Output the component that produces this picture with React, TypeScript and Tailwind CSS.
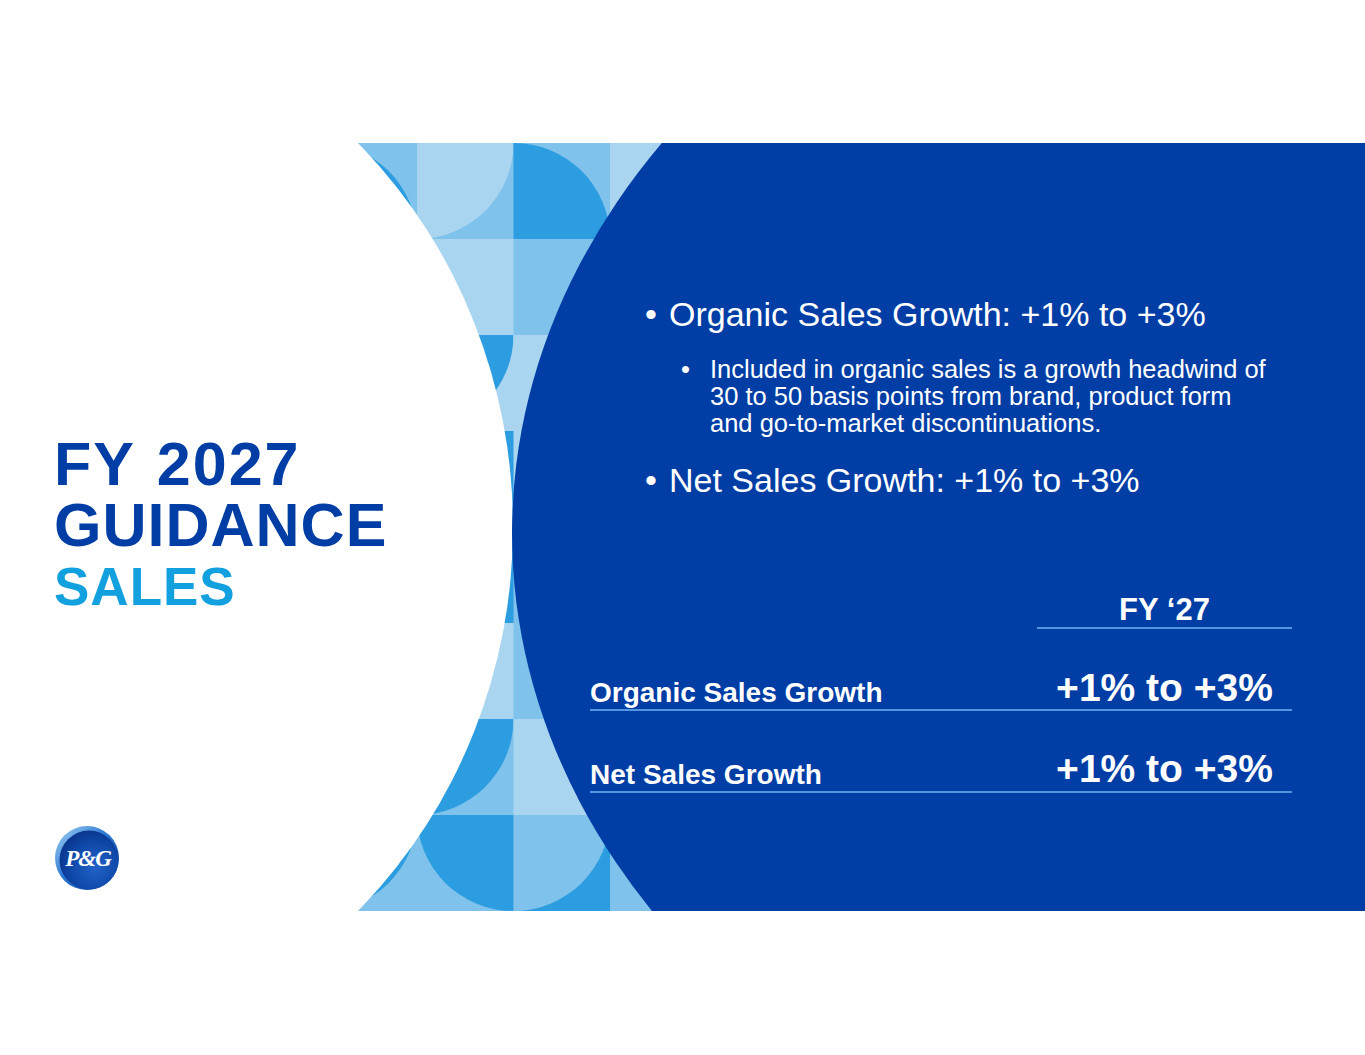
import React from "react";

const L = "#a9d5f1";
const M = "#7fc2eb";
const D = "#2c9de0";

type Corner = "TL" | "TR" | "BL" | "BR";
type Tile = { r: number; c: number; bg: string; q?: { corner: Corner; color: string } };

const TW = 96.5;
const TH = 96;
const X0 = 320.5;

function quarter(x: number, y: number, w: number, h: number, corner: Corner) {
  switch (corner) {
    case "TL":
      return `M${x} ${y} L${x + w} ${y} A${w} ${h} 0 0 1 ${x} ${y + h} Z`;
    case "TR":
      return `M${x + w} ${y} L${x + w} ${y + h} A${w} ${h} 0 0 1 ${x} ${y} Z`;
    case "BL":
      return `M${x} ${y + h} L${x} ${y} A${w} ${h} 0 0 1 ${x + w} ${y + h} Z`;
    case "BR":
      return `M${x + w} ${y + h} L${x} ${y + h} A${w} ${h} 0 0 1 ${x + w} ${y} Z`;
  }
}

const tiles: Tile[] = [
  { r: 0, c: 0, bg: M, q: { corner: "BL", color: D } },
  { r: 0, c: 1, bg: M, q: { corner: "TL", color: L } },
  { r: 0, c: 2, bg: M, q: { corner: "BL", color: D } },
  { r: 0, c: 3, bg: L },
  { r: 1, c: 0, bg: L },
  { r: 1, c: 1, bg: L },
  { r: 1, c: 2, bg: M },
  { r: 1, c: 3, bg: M },
  { r: 2, c: 0, bg: L },
  { r: 2, c: 1, bg: L, q: { corner: "TL", color: D } },
  { r: 2, c: 2, bg: L },
  { r: 2, c: 3, bg: L },
  { r: 3, c: 0, bg: L },
  { r: 3, c: 1, bg: D },
  { r: 3, c: 2, bg: L },
  { r: 3, c: 3, bg: L },
  { r: 4, c: 0, bg: L },
  { r: 4, c: 1, bg: D },
  { r: 4, c: 2, bg: M },
  { r: 4, c: 3, bg: M },
  { r: 5, c: 0, bg: L },
  { r: 5, c: 1, bg: L },
  { r: 5, c: 2, bg: M },
  { r: 5, c: 3, bg: M },
  { r: 6, c: 0, bg: L },
  { r: 6, c: 1, bg: M, q: { corner: "TL", color: D } },
  { r: 6, c: 2, bg: L },
  { r: 6, c: 3, bg: L },
  { r: 7, c: 0, bg: M, q: { corner: "TL", color: D } },
  { r: 7, c: 1, bg: M, q: { corner: "TR", color: D } },
  { r: 7, c: 2, bg: D, q: { corner: "TL", color: M } },
  { r: 7, c: 3, bg: M },
];

function BackgroundArt() {
  return (
    <svg
      className="absolute inset-0"
      width={1365}
      height={768}
      viewBox="0 0 1365 768"
      aria-hidden="true"
    >
      {tiles.map((t, i) => {
        const x = X0 + t.c * TW;
        const y = t.r * TH;
        return (
          <g key={i}>
            <rect x={x} y={y} width={TW + 0.5} height={TH + 0.5} fill={t.bg} />
            {t.q && <path d={quarter(x, y, TW, TH, t.q.corner)} fill={t.q.color} />}
          </g>
        );
      })}
      <ellipse cx={0} cy={384} rx={513} ry={536} fill="#ffffff" />
      <ellipse cx={1396} cy={390} rx={884} ry={700} fill="#003da5" />
    </svg>
  );
}

function Logo() {
  return (
    <svg width={66} height={66} viewBox="0 0 66 66" aria-label="P&G">
      <defs>
        <linearGradient id="pgRing" x1="0" y1="0" x2="1" y2="1">
          <stop offset="0" stopColor="#a6d6f6" />
          <stop offset="0.45" stopColor="#2b78d4" />
          <stop offset="1" stopColor="#0a3a94" />
        </linearGradient>
        <radialGradient id="pgFill" cx="0.6" cy="0.62" r="0.62">
          <stop offset="0" stopColor="#2262c6" />
          <stop offset="0.65" stopColor="#0f49aa" />
          <stop offset="1" stopColor="#0a3790" />
        </radialGradient>
      </defs>
      <circle cx={33} cy={33} r={32} fill="url(#pgRing)" />
      <circle cx={35} cy={35} r={29.5} fill="url(#pgFill)" />
      <text
        x={34}
        y={41}
        textAnchor="middle"
        fill="#ffffff"
        fontFamily="'Liberation Serif', 'DejaVu Serif', serif"
        fontStyle="italic"
        fontWeight="bold"
        fontSize={23}
        letterSpacing={-1}
      >
        P&amp;G
      </text>
    </svg>
  );
}

export default function App() {
  return (
    <div className="w-[1365px] h-[1055px] bg-white flex flex-col font-['Liberation_Sans',Arial,sans-serif]">
      <div className="h-[143px] shrink-0" />
      <div className="relative h-[768px] w-[1365px] overflow-hidden shrink-0">
        <BackgroundArt />
        <div className="relative flex h-full">
          {/* Left column: title + logo */}
          <div className="w-[590px] shrink-0 flex flex-col pl-[54px] pt-[291px]">
            <div className="text-[61px] leading-[61px] font-bold text-[#003da5] tracking-[2px] [word-spacing:3px] whitespace-nowrap">
              FY 2027
            </div>
            <div className="text-[61px] leading-[61px] font-bold text-[#003da5] tracking-[1px] whitespace-nowrap">
              GUIDANCE
            </div>
            <div className="mt-[4px] text-[53px] leading-[53px] font-bold text-[#12a0df] tracking-[1px] whitespace-nowrap">
              SALES
            </div>
            <div className="mt-[212px]">
              <Logo />
            </div>
          </div>

          {/* Right column: bullets + table */}
          <div className="w-[775px] flex flex-col pt-[151px] text-white">
            <div className="ml-[55px] flex text-[34px] leading-[41px] whitespace-nowrap">
              <span className="w-[24px] shrink-0">•</span>
              <span>Organic Sales Growth: +1% to +3%</span>
            </div>
            <div className="ml-[91px] mt-[21px] flex text-[25.5px] leading-[27px] whitespace-nowrap">
              <span className="w-[29px] shrink-0">•</span>
              <span>
                Included in organic sales is a growth headwind of
                <br />
                30 to 50 basis points from brand, product form
                <br />
                and go-to-market discontinuations.
              </span>
            </div>
            <div className="ml-[55px] mt-[23px] flex text-[34px] leading-[41px] whitespace-nowrap">
              <span className="w-[24px] shrink-0">•</span>
              <span>Net Sales Growth: +1% to +3%</span>
            </div>

            <div className="mt-[93px] grid grid-cols-[447px_255px] font-bold whitespace-nowrap">
              <div />
              <div className="border-b-2 border-[#5494e0] pb-[2px] text-center text-[31px] leading-[31px]">
                FY ‘27
              </div>

              <div className="h-[82px] border-b-2 border-[#5494e0] flex items-end pb-[2px] text-[28px] leading-[28px]">
                Organic Sales Growth
              </div>
              <div className="h-[82px] border-b-2 border-[#5494e0] flex items-end justify-center pb-[2px] text-[39px] leading-[39px]">
                +1% to +3%
              </div>

              <div className="h-[82px] border-b-2 border-[#5494e0] flex items-end pb-[2px] text-[28px] leading-[28px]">
                Net Sales Growth
              </div>
              <div className="h-[82px] border-b-2 border-[#5494e0] flex items-end justify-center pb-[3px] text-[39px] leading-[39px]">
                +1% to +3%
              </div>
            </div>
          </div>
        </div>
      </div>
    </div>
  );
}
